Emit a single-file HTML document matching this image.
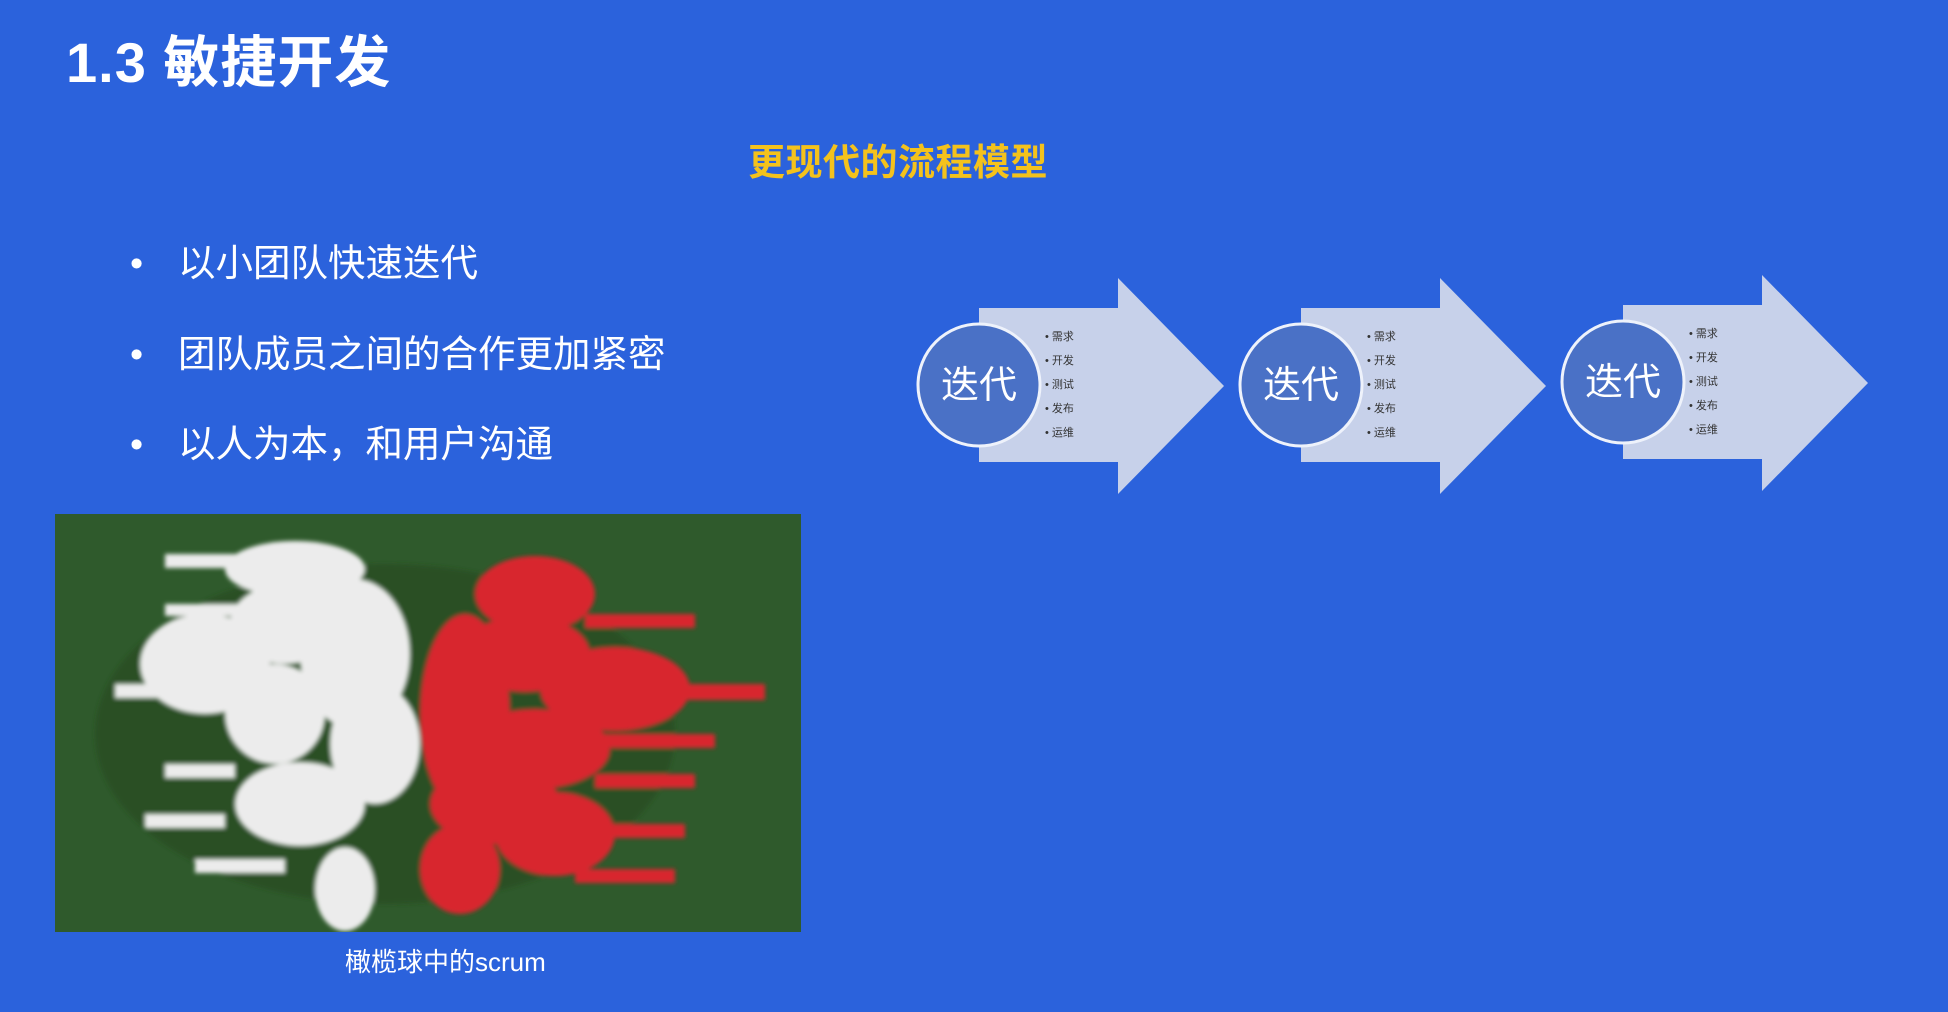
<!DOCTYPE html>
<html><head><meta charset="utf-8"><style>
html,body{margin:0;padding:0}
body{width:1948px;height:1012px;background:#2b62dc;position:relative;overflow:hidden;font-family:"Liberation Sans","Noto Sans CJK SC",sans-serif;color:#fff}
.t{position:absolute;left:66px;top:18px;font-size:56px;font-weight:bold;letter-spacing:1px;white-space:nowrap}
.sub{position:absolute;left:748px;top:132px;font-size:37px;font-weight:bold;color:#f4c21c;white-space:nowrap;letter-spacing:0.5px}
.b{position:absolute;left:130px;font-size:37.5px;white-space:nowrap}
.b span{display:inline-block;width:48px}
.cap{position:absolute;left:345px;top:942px;font-size:26px;white-space:nowrap}
.photo{position:absolute;left:55px;top:514px;width:746px;height:418px}
</style></head><body>
<div class="t">1.3 敏捷开发</div>
<div class="sub">更现代的流程模型</div>
<div class="b" style="top:232px"><span>•</span>以小团队快速迭代</div>
<div class="b" style="top:323px"><span>•</span>团队成员之间的合作更加紧密</div>
<div class="b" style="top:413px"><span>•</span>以人为本，和用户沟通</div>

<svg class="photo" viewBox="0 0 746 418">
<defs><filter id="bl"><feGaussianBlur stdDeviation="2"/></filter></defs>
<rect width="746" height="418" fill="#2f5a2c"/>
<g filter="url(#bl)">
<ellipse cx="330" cy="220" rx="290" ry="170" fill="#244822" opacity=".6"/>
<g fill="#ececec">
<ellipse cx="240" cy="55" rx="70" ry="28"/>
<ellipse cx="150" cy="150" rx="65" ry="50"/>
<ellipse cx="230" cy="110" rx="55" ry="40"/>
<ellipse cx="300" cy="140" rx="55" ry="75"/>
<ellipse cx="220" cy="200" rx="50" ry="50"/>
<ellipse cx="320" cy="230" rx="45" ry="60"/>
<ellipse cx="245" cy="290" rx="65" ry="42"/>
<ellipse cx="290" cy="375" rx="30" ry="42"/>
<rect x="110" y="40" width="90" height="14"/>
<rect x="110" y="90" width="90" height="12"/>
<rect x="60" y="170" width="60" height="14"/>
<rect x="110" y="250" width="70" height="14"/>
<rect x="90" y="300" width="80" height="14"/>
<rect x="140" y="345" width="90" height="14"/>
</g>
<g fill="#d8282d">
<ellipse cx="410" cy="200" rx="45" ry="100"/>
<ellipse cx="480" cy="80" rx="60" ry="38"/>
<ellipse cx="470" cy="140" rx="65" ry="38"/>
<ellipse cx="560" cy="175" rx="75" ry="42"/>
<ellipse cx="480" cy="235" rx="75" ry="40"/>
<ellipse cx="440" cy="290" rx="65" ry="40"/>
<ellipse cx="500" cy="320" rx="60" ry="42"/>
<ellipse cx="405" cy="355" rx="40" ry="45"/>
<rect x="530" y="100" width="110" height="14"/>
<rect x="600" y="170" width="110" height="16"/>
<rect x="540" y="220" width="120" height="14"/>
<rect x="540" y="260" width="100" height="14"/>
<rect x="540" y="310" width="90" height="14"/>
<rect x="520" y="355" width="100" height="14"/>
</g>
</g>
</svg>
<div class="cap">橄榄球中的scrum</div>

<svg style="position:absolute;left:0;top:0" width="1948" height="1012">
<g id="a1">
<polygon points="979,308 1118,308 1118,278 1224,386 1118,494 1118,462 979,462" fill="#c7d1ea"/>
<circle cx="979" cy="385" r="61" fill="#4a71c6" stroke="#eef2fb" stroke-width="3"/>
<text x="979" y="398" fill="#fff" font-size="38" text-anchor="middle" font-family="Liberation Sans, Noto Sans CJK SC, sans-serif">迭代</text>
<g font-size="11" fill="#333" font-family="Liberation Sans, Noto Sans CJK SC, sans-serif">
<text x="1045" y="340">• 需求</text><text x="1045" y="364">• 开发</text><text x="1045" y="388">• 测试</text><text x="1045" y="412">• 发布</text><text x="1045" y="436">• 运维</text>
</g></g>
<use href="#a1" x="322" y="0"/>
<use href="#a1" x="644" y="-3"/>
</svg>
</body></html>
